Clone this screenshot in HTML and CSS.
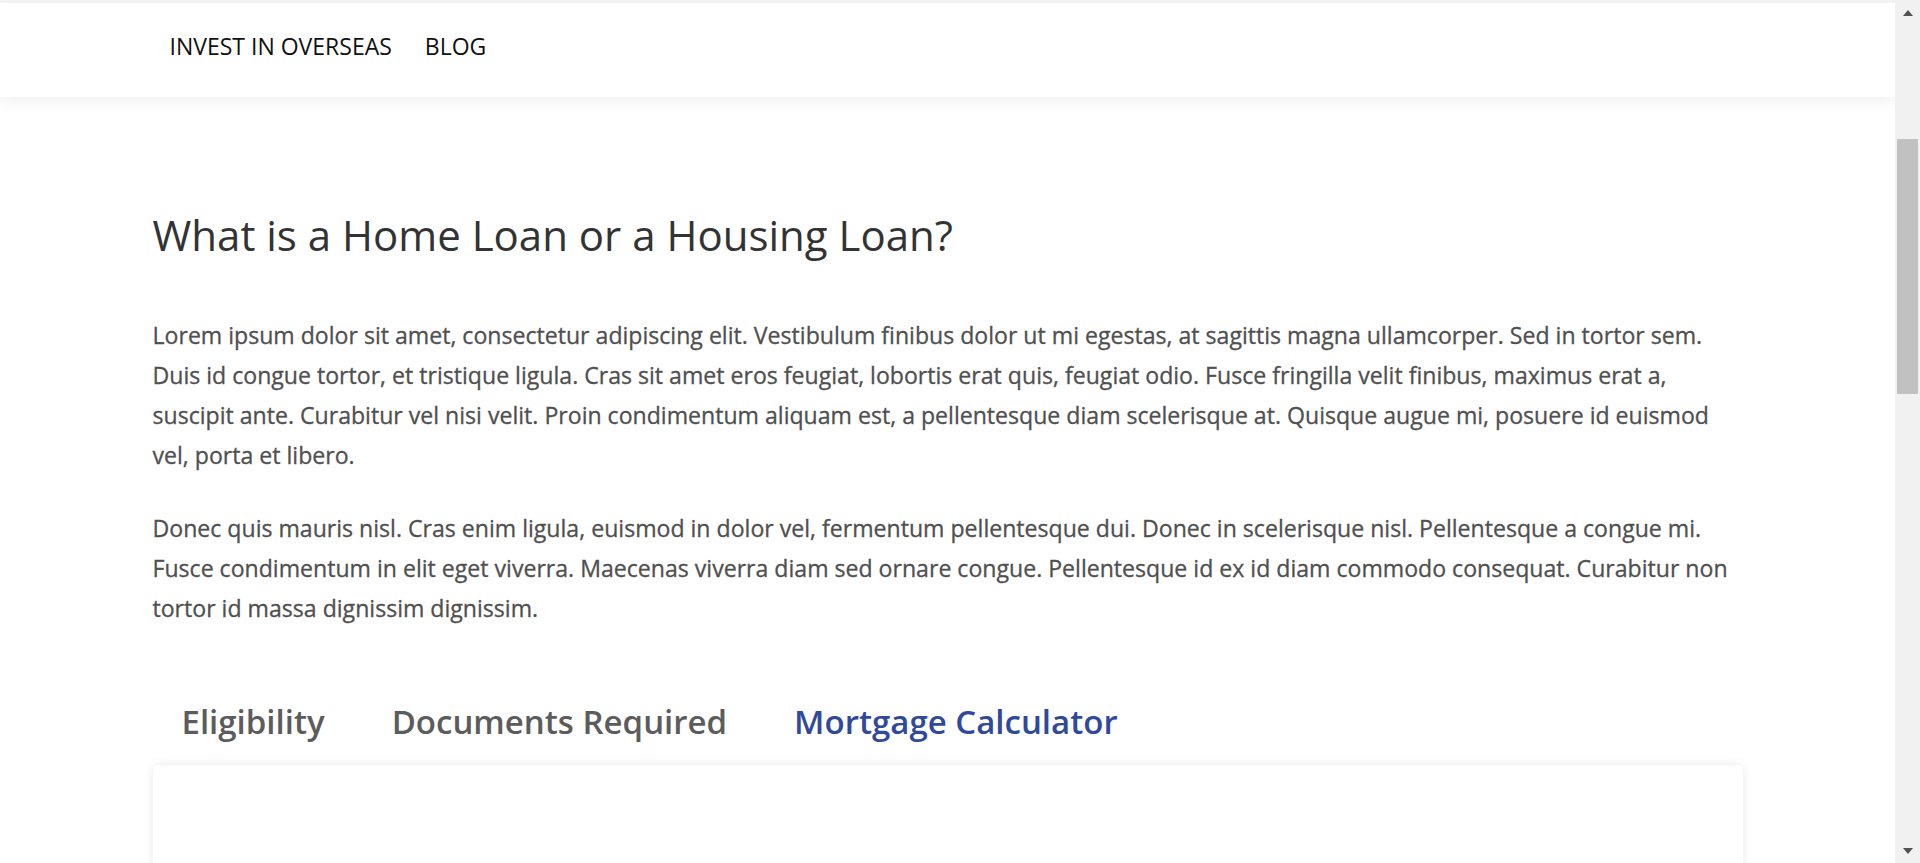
FILE: index.html
```
<!DOCTYPE html>
<html lang="en">
<head>
<meta charset="utf-8">
<title>What is a Home Loan or a Housing Loan?</title>
<link rel="stylesheet" href="styles.css">
</head>
<body>
<div class="window">
  <div class="page">
    <div class="top-strip"></div>
    <header class="site-header">
      <nav class="nav">
        <a class="nav-link" href="#">INVEST IN OVERSEAS</a>
        <a class="nav-link" href="#">BLOG</a>
      </nav>
    </header>
    <main class="container">
      <h1 class="title">What is a Home Loan or a Housing Loan?</h1>
      <p class="text">Lorem ipsum dolor sit amet, consectetur adipiscing elit. Vestibulum finibus dolor ut mi egestas, at sagittis magna ullamcorper. Sed in tortor sem. Duis id congue tortor, et tristique ligula. Cras sit amet eros feugiat, lobortis erat quis, feugiat odio. Fusce fringilla velit finibus, maximus erat a, suscipit ante. Curabitur vel nisi velit. Proin condimentum aliquam est, a pellentesque diam scelerisque at. Quisque augue mi, posuere id euismod vel, porta et libero.</p>
      <p class="text">Donec quis mauris nisl. Cras enim ligula, euismod in dolor vel, fermentum pellentesque dui. Donec in scelerisque nisl. Pellentesque a congue mi. Fusce condimentum in elit eget viverra. Maecenas viverra diam sed ornare congue. Pellentesque id ex id diam commodo consequat. Curabitur non tortor id massa dignissim dignissim.</p>
      <ul class="tabs">
        <li class="tab">Eligibility</li>
        <li class="tab">Documents Required</li>
        <li class="tab tab-active">Mortgage Calculator</li>
      </ul>
      <div class="card"></div>
    </main>
  </div>
  <div class="scrollbar">
    <div class="sb-btn"><span class="arrow-up"></span></div>
    <div class="sb-track"><div class="sb-thumb"></div></div>
    <div class="sb-btn"><span class="arrow-down"></span></div>
  </div>
</div>
</body>
</html>
```
FILE: styles.css
```
html, body {
  margin: 0;
  padding: 0;
  height: 100%;
  overflow: hidden;
}

body {
  font-family: "Open Sans", "Liberation Sans", sans-serif;
  background: #ffffff;
  color: #555555;
}

.window {
  display: flex;
  height: 100vh;
}

.page {
  flex: 1;
  overflow: hidden;
  background: #ffffff;
}

.top-strip {
  height: 3px;
  background: #f4f4f4;
}

.site-header {
  position: relative;
  z-index: 2;
  height: 94px;
  box-sizing: border-box;
  padding-top: 28px;
  background: #ffffff;
  box-shadow: 0 5px 14px rgba(0, 0, 0, 0.06);
}

.nav {
  width: 1590px;
  margin: 0 auto;
  box-sizing: border-box;
  padding-left: 17px;
  display: flex;
  gap: 33px;
}

.nav-link {
  font-size: 23px;
  line-height: 30px;
  color: #111111;
  text-decoration: none;
}

.container {
  width: 1590px;
  margin: 0 auto;
  padding-top: 113px;
}

.title {
  margin: 0 0 55px;
  font-size: 42px;
  line-height: 50px;
  font-weight: 400;
  color: #333333;
}

.text {
  margin: 0 0 33px;
  font-size: 23.1px;
  line-height: 40px;
  font-weight: 400;
  color: #505050;
  -webkit-text-stroke: 0.3px #505050;
}

.tabs {
  list-style: none;
  margin: 70px 0 0;
  padding: 0 0 0 29px;
  display: flex;
  gap: 67px;
}

.tab {
  font-size: 33px;
  line-height: 48px;
  font-weight: 600;
  color: #5c5c5c;
}

.tab-active {
  color: #30499b;
}

.card {
  margin-top: 19px;
  height: 320px;
  background: #ffffff;
  border-radius: 5px;
  box-shadow: 0 0 12px rgba(0, 0, 0, 0.09);
}

.scrollbar {
  width: 25px;
  flex: none;
  background: #f1f1f1;
  display: flex;
  flex-direction: column;
}

.sb-btn {
  height: 25px;
  flex: none;
  display: flex;
  justify-content: center;
  align-items: center;
}

.arrow-up {
  width: 0;
  height: 0;
  border-left: 5.5px solid transparent;
  border-right: 5.5px solid transparent;
  border-bottom: 6px solid #505050;
}

.arrow-down {
  width: 0;
  height: 0;
  border-left: 5.5px solid transparent;
  border-right: 5.5px solid transparent;
  border-top: 6px solid #505050;
}

.sb-track {
  flex: 1;
}

.sb-thumb {
  margin: 114px 2px 0;
  height: 255px;
  background: #c1c1c1;
}
```
